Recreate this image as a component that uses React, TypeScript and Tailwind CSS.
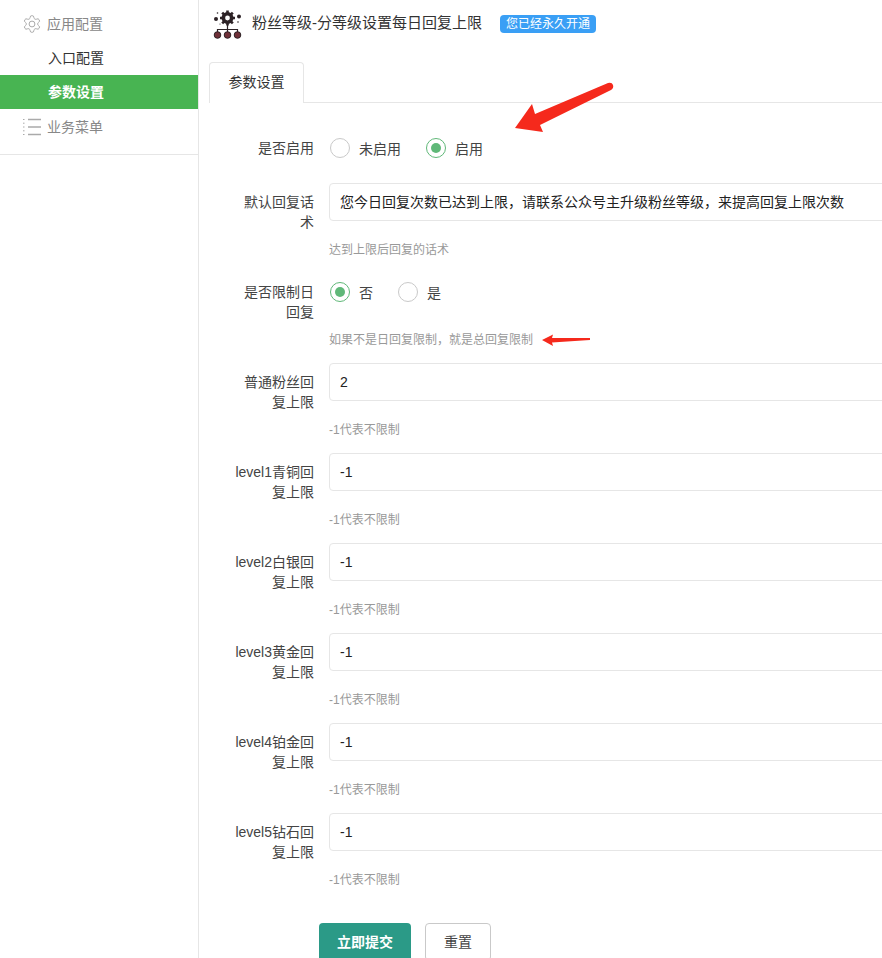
import React from 'react';

const FONT = "font-['Liberation_Sans','Noto_Sans_CJK_SC',sans-serif]";

const limitRows = [
    { label: '普通粉丝回复上限', value: '2' },
    { label: 'level1青铜回复上限', value: '-1' },
    { label: 'level2白银回复上限', value: '-1' },
    { label: 'level3黄金回复上限', value: '-1' },
    { label: 'level4铂金回复上限', value: '-1' },
    { label: 'level5钻石回复上限', value: '-1' },
];

const GearIcon = () => (
    <svg width="29" height="29" viewBox="0 0 29 29" className="shrink-0">
        <circle cx="14.5" cy="8" r="4.2" fill="none" stroke="#2c2226" strokeWidth="3.6" />
        <g stroke="#2c2226" strokeWidth="2.6">
            <path d="M14.5 0.500v3M14.5 12.500v3M7 8h3M19 8h3M9.200 2.700l2 2M17.800 11.300l2 2M19.800 2.700l-2 2M11.200 11.300l-2 2" />
        </g>
        <circle cx="3" cy="9" r="2" fill="#2c2226" />
        <circle cx="26" cy="6.500" r="2" fill="#2c2226" />
        <circle cx="4.500" cy="3" r="0.800" fill="#2c2226" />
        <circle cx="25" cy="12" r="0.800" fill="#2c2226" />
        <circle cx="7" cy="14" r="0.600" fill="#2c2226" />
        <path d="M14.500 15v4.500M4.500 22v-2.500h20V22M14.500 19.500V22" fill="none" stroke="#2c2226" strokeWidth="1.200" />
        <circle cx="4.500" cy="25" r="3.300" fill="#6f3038" stroke="#2c2226" />
        <circle cx="14.500" cy="25" r="3.300" fill="#6f3038" stroke="#2c2226" />
        <circle cx="24.500" cy="25" r="3.300" fill="#6f3038" stroke="#2c2226" />
    </svg>
);

const SettingsIcon = () => (
    <svg width="20" height="20" viewBox="0 0 24 24" fill="none" stroke="#aaa" strokeWidth="1.200" className="-ml-[1px] mr-[-1px] shrink-0">
        <circle cx="12" cy="12" r="3.500" />
        <path d="M12.220 2h-.44a2 2 0 0 0-2 2v.18a2 2 0 0 1-1 1.730l-.43.250a2 2 0 0 1-2 0l-.15-.08a2 2 0 0 0-2.730.730l-.22.380a2 2 0 0 0 .730 2.730l.15.100a2 2 0 0 1 1 1.720v.510a2 2 0 0 1-1 1.740l-.15.090a2 2 0 0 0-.730 2.730l.22.380a2 2 0 0 0 2.730.730l.15-.08a2 2 0 0 1 2 0l.43.250a2 2 0 0 1 1 1.730V20a2 2 0 0 0 2 2h.44a2 2 0 0 0 2-2v-.18a2 2 0 0 1 1-1.730l.43-.250a2 2 0 0 1 2 0l.15.080a2 2 0 0 0 2.730-.730l.22-.390a2 2 0 0 0-.730-2.730l-.15-.080a2 2 0 0 1-1-1.740v-.500a2 2 0 0 1 1-1.740l.15-.090a2 2 0 0 0 .730-2.730l-.22-.380a2 2 0 0 0-2.730-.730l-.15.080a2 2 0 0 1-2 0l-.43-.250a2 2 0 0 1-1-1.730V4a2 2 0 0 0-2-2z" />
    </svg>
);

const ListIcon = () => (
    <svg width="18" height="18" viewBox="0 0 18 18" fill="none" stroke="#aaa" className="shrink-0">
        <path d="M5 1.500h13M5 9h13M5 16.500h13" strokeWidth="1.300" />
        <path d="M0 1.500h1.500M0 5.200h1.500M0 9h1.500M0 12.800h1.500M0 16.500h1.500" strokeWidth="1" />
    </svg>
);

const Radio = ({ label, checked }: { label: string; checked?: boolean }) => (
    <div className="flex items-center">
        <span className={`flex h-5 w-5 items-center justify-center rounded-full border bg-white ${checked ? 'border-[#5fb878]' : 'border-[#c9c9c9]'}`}>
            {checked && <span className="h-2.5 w-2.5 rounded-full bg-[#5fb878]" />}
        </span>
        <span className="ml-[9px] pt-[1px] text-sm text-[#444]">{label}</span>
    </div>
);

const FormRow = ({ label, hint, children }: { label: string; hint?: string; children: React.ReactNode }) => (
    <div className={`flex ${hint ? 'h-[90px]' : 'h-[54px]'}`}>
        <label className="w-[120px] shrink-0 pl-[25px] pr-[15px] pt-[9px] text-right text-sm leading-5 text-[#444]">{label}</label>
        <div className="min-w-[560px] flex-1">
            {children}
            {hint && <div className="mt-[19px] text-xs leading-5 text-[#999]">{hint}</div>}
        </div>
    </div>
);

const TextField = ({ value }: { value: string }) => (
    <div className="flex h-[38px] w-[640px] items-center rounded-sm border border-[#e6e6e6] bg-white pl-[10px] text-sm text-[#222]">{value}</div>
);

const App = () => {
    return (
        <div className={`relative flex h-[958px] w-[882px] overflow-hidden bg-white ${FONT}`}>
            {/* left menu */}
            <aside className="h-full w-[199px] shrink-0 border-r border-[#e6e6e6] pt-[7px]">
                <div className="h-[148px] border-b border-[#e6e6e6]">
                    <div className="flex h-[34px] items-center pl-[23px] text-sm text-[#888]">
                        <SettingsIcon />
                        <span className="ml-[6px]">应用配置</span>
                    </div>
                    <div className="flex h-[34px] items-center pl-[48px] text-sm text-[#333]">入口配置</div>
                    <div className="flex h-[34px] items-center bg-[#48b452] pl-[48px] text-sm font-bold text-white">参数设置</div>
                    <div className="flex h-[35px] items-center pl-[23px] text-sm text-[#888]">
                        <ListIcon />
                        <span className="ml-[6px]">业务菜单</span>
                    </div>
                </div>
            </aside>

            <main className="min-w-0 flex-1 pl-[10px]">
                <div className="flex h-[62px] items-start pl-[4px] pt-[10px]">
                    <GearIcon />
                    <h1 className="ml-[10px] mt-[2px] text-[15px] font-normal leading-[22px] text-[#333]">粉丝等级-分等级设置每日回复上限</h1>
                    <span className="ml-[18px] mt-[5px] flex h-[18px] items-center rounded-sm bg-[#3a9ff5] px-[6px] text-xs text-white">您已经永久开通</span>
                </div>

                <div className="flex h-[41px] border-b border-[#e6e6e6]">
                    <div className="-mb-px flex h-[41px] w-[95px] items-center justify-center rounded-t-sm border border-b-0 border-[#e6e6e6] bg-white pb-[2px] text-sm text-[#333]">参数设置</div>
                </div>

                <form className="pt-[26px]">
                    <FormRow label="是否启用">
                        <div className="flex h-[38px] items-center pl-[1px]">
                            <Radio label="未启用" />
                            <div className="ml-[25px]"><Radio label="启用" checked /></div>
                        </div>
                    </FormRow>
                    <FormRow label="默认回复话术" hint="达到上限后回复的话术">
                        <TextField value="您今日回复次数已达到上限，请联系公众号主升级粉丝等级，来提高回复上限次数" />
                    </FormRow>
                    <FormRow label="是否限制日回复" hint="如果不是日回复限制，就是总回复限制">
                        <div className="flex h-[38px] items-center pl-[1px]">
                            <Radio label="否" checked />
                            <div className="ml-[25px]"><Radio label="是" /></div>
                        </div>
                    </FormRow>
                    {limitRows.map((row) => (
                        <FormRow key={row.label} label={row.label} hint="-1代表不限制">
                            <TextField value={row.value} />
                        </FormRow>
                    ))}
                    <div className="mt-[20px] flex pl-[110px]">
                        <button type="button" className="h-[38px] w-[92px] rounded-sm bg-[#2b9a87] text-sm font-bold text-white">立即提交</button>
                        <button type="button" className="ml-[14px] h-[38px] w-[66px] rounded-sm border border-[#c9c9c9] bg-white text-sm text-[#444]">重置</button>
                    </div>
                </form>
            </main>

            {/* annotation arrows on top of the screenshot */}
            <svg width="882" height="958" className="pointer-events-none absolute left-0 top-0">
                <path d="M515 128 L532 104 L535 114 L608 83 Q612 82 613 85 Q614 88 611 90 L540 125 L543 132 Z" fill="#f5291c" />
                <path d="M542 340 L553 334.500 L552 338 L590 338 L590 340 L552 342.500 L553 346 Z" fill="#f5291c" />
            </svg>
        </div>
    );
};

export default App;
